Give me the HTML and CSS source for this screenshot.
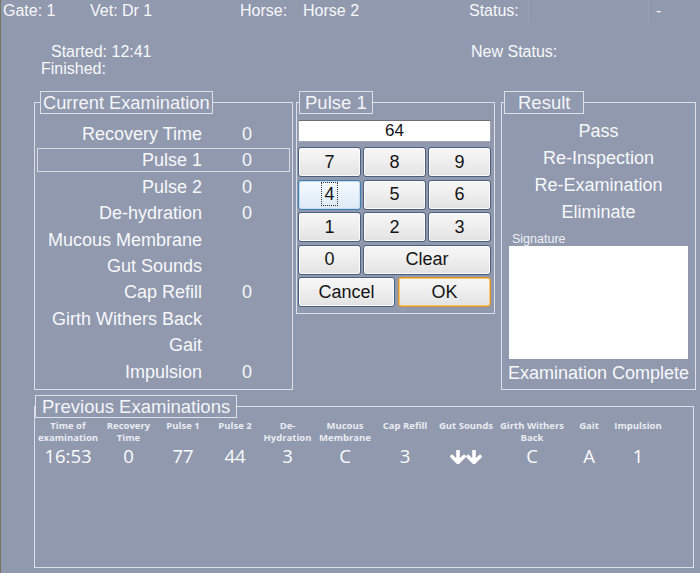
FILE: index.html
```html
<!DOCTYPE html>
<html lang="en">
<head>
    <meta charset="UTF-8">
    <title>Vet Gate Examination</title>
    <link rel="stylesheet" href="styles.css">
</head>
<body>
    <div class="info-row">
        <span class="gate">Gate: 1</span>
        <span class="vet">Vet: Dr 1</span>
        <span class="horse-label">Horse:</span>
        <span class="horse">Horse 2</span>
        <span class="status-label">Status:</span>
        <span class="status-box"></span>
        <span class="status-dash">-</span>
    </div>

    <div class="times">
        <div class="time-row">
            <span class="started">Started: 12:41</span>
            <span>New Status:</span>
        </div>
        <div class="time-row">
            <span class="finished">Finished:</span>
        </div>
    </div>

    <div class="panels">
        <fieldset class="group current">
            <legend>Current Examination</legend>
            <div class="exam-row"><span class="label">Recovery Time</span><span class="value">0</span></div>
            <div class="exam-row active"><span class="label">Pulse 1</span><span class="value">0</span></div>
            <div class="exam-row"><span class="label">Pulse 2</span><span class="value">0</span></div>
            <div class="exam-row"><span class="label">De-hydration</span><span class="value">0</span></div>
            <div class="exam-row"><span class="label">Mucous Membrane</span><span class="value"></span></div>
            <div class="exam-row"><span class="label">Gut Sounds</span><span class="value"></span></div>
            <div class="exam-row"><span class="label">Cap Refill</span><span class="value">0</span></div>
            <div class="exam-row"><span class="label">Girth Withers Back</span><span class="value"></span></div>
            <div class="exam-row"><span class="label">Gait</span><span class="value"></span></div>
            <div class="exam-row"><span class="label">Impulsion</span><span class="value">0</span></div>
        </fieldset>

        <fieldset class="group pulse">
            <legend>Pulse 1</legend>
            <div class="entry">64</div>
            <div class="keypad">
                <button class="key">7</button>
                <button class="key">8</button>
                <button class="key">9</button>
                <button class="key focused"><span class="focus-ring">4</span></button>
                <button class="key">5</button>
                <button class="key">6</button>
                <button class="key">1</button>
                <button class="key">2</button>
                <button class="key">3</button>
                <button class="key">0</button>
                <button class="key wide">Clear</button>
            </div>
            <div class="actions">
                <button class="key cancel">Cancel</button>
                <button class="key ok">OK</button>
            </div>
        </fieldset>

        <fieldset class="group result">
            <legend>Result</legend>
            <div class="choice">Pass</div>
            <div class="choice">Re-Inspection</div>
            <div class="choice">Re-Examination</div>
            <div class="choice">Eliminate</div>
            <div class="sig-label">Signature</div>
            <div class="sig-box"></div>
            <div class="complete">Examination Complete</div>
        </fieldset>
    </div>

    <fieldset class="group previous">
        <legend>Previous Examinations</legend>
        <div class="prev-grid">
            <div class="head">Time of<br>examination</div>
            <div class="head">Recovery<br>Time</div>
            <div class="head">Pulse 1</div>
            <div class="head">Pulse 2</div>
            <div class="head">De-<br>Hydration</div>
            <div class="head">Mucous<br>Membrane</div>
            <div class="head">Cap Refill</div>
            <div class="head">Gut Sounds</div>
            <div class="head">Girth Withers<br>Back</div>
            <div class="head">Gait</div>
            <div class="head">Impulsion</div>

            <div class="val">16:53</div>
            <div class="val">0</div>
            <div class="val">77</div>
            <div class="val">44</div>
            <div class="val">3</div>
            <div class="val">C</div>
            <div class="val">3</div>
            <div class="val">
                <svg class="arrows" width="32" height="14" viewBox="0 0 32 14">
                    <path d="M8 0.5 V12 M2 6.5 L8 12.5 L14 6.5" fill="none" stroke="#fff" stroke-width="3.6" stroke-linejoin="round" stroke-linecap="round"/>
                    <path d="M24 0.5 V12 M18 6.5 L24 12.5 L30 6.5" fill="none" stroke="#fff" stroke-width="3.6" stroke-linejoin="round" stroke-linecap="round"/>
                </svg>
            </div>
            <div class="val">C</div>
            <div class="val">A</div>
            <div class="val">1</div>
        </div>
    </fieldset>
</body>
</html>
```

FILE: styles.css
```css
body {
    margin: 0;
    width: 700px;
    height: 573px;
    overflow: hidden;
    background-color: #9199ae;
    color: #f7f8fb;
    font-family: "Liberation Sans", Arial, sans-serif;
    box-shadow: inset 1px 0 0 #77735f;
}

/* top info */
.info-row {
    display: flex;
    height: 22px;
    line-height: 22px;
    font-size: 16px;
    padding-left: 3px;
    white-space: nowrap;
}
.gate { width: 87px; }
.vet { width: 150px; }
.horse-label { width: 63px; }
.horse { width: 166px; }
.status-label { width: 59px; }
.status-box {
    width: 121px;
    box-sizing: border-box;
    border-left: 1px solid #99a2b7;
    border-right: 1px solid #99a2b7;
}
.status-dash { margin-left: 7px; }

.times {
    margin-top: 21px;
    font-size: 16px;
    line-height: 17px;
}
.time-row {
    display: flex;
    height: 17px;
    white-space: nowrap;
}
.started {
    margin-left: 51px;
    width: 420px;
}
.finished { margin-left: 41px; }

/* group boxes */
.panels {
    display: flex;
    align-items: flex-start;
    margin-top: 14px;
    padding-left: 34px;
}
.group {
    margin: 0;
    min-width: 0;
    box-sizing: border-box;
    border: 1px solid #dce0e8;
}
.group legend {
    border: 1px solid #dce0e8;
    padding: 0 2px;
    font-size: 18.5px;
    line-height: 21px;
    color: #f3f5f9;
    text-align: left;
}

.current {
    width: 259px;
    height: 299px;
    padding: 8px 2px 0;
}
.current legend {
    margin-left: 3px;
    font-size: 18.3px;
}
.exam-row {
    display: grid;
    grid-template-columns: 165px 87px;
    height: 24px;
    line-height: 24px;
    margin-bottom: 2.4px;
    font-size: 18px;
    white-space: nowrap;
}
.exam-row .label { text-align: right; }
.exam-row .value { padding-left: 40px; }
.exam-row.active {
    outline: 1px solid #d6dbe4;
    outline-offset: -1px;
}

/* keypad */
.pulse {
    width: 199px;
    height: 223px;
    margin-left: 3px;
    padding: 6px 2px 0 1px;
}
.pulse legend {
    margin-left: 1px;
    padding: 0 5px;
}
.entry {
    width: 193px;
    height: 22px;
    box-sizing: border-box;
    background: #fff;
    border: 1px solid #9ea3ad;
    border-top-color: #6b6f78;
    color: #111;
    text-align: center;
    font-size: 17px;
    line-height: 20px;
}
.keypad {
    display: grid;
    grid-template-columns: 63px 63px 63px;
    grid-auto-rows: 30px;
    column-gap: 2px;
    row-gap: 2.5px;
    margin-top: 5px;
}
.key {
    margin: 0;
    padding: 0;
    font-family: "Liberation Sans", Arial, sans-serif;
    font-size: 18px;
    color: #151515;
    border: 1px solid #4b607d;
    border-radius: 3px;
    background: linear-gradient(#f7f7f7, #eeeeee 50%, #e2e2e2);
    box-shadow: inset 0 0 0 1px #fbfbfb;
}
.key.wide { grid-column: span 2; }
.key.focused {
    border-color: #3c7fb1;
    background: linear-gradient(#f4f9fd, #e9f2fa 50%, #dde9f4);
    box-shadow: inset 0 0 0 1px #c5dcf0;
}
.focus-ring {
    border: 1px dotted #333;
    padding: 1px 2px;
}
.actions {
    display: flex;
    gap: 3px;
    margin-top: 2.5px;
    height: 30px;
}
.cancel { width: 97px; }
.ok {
    width: 93px;
    border-color: #d9952c;
    box-shadow: inset 0 0 0 1px #f5c874;
}

/* result */
.result {
    width: 195px;
    height: 299px;
    margin-left: 6px;
    padding: 4px 2px 0;
}
.result legend { padding: 0 13px; }
.choice {
    text-align: center;
    font-size: 18px;
    line-height: 27px;
}
.sig-label {
    margin: 7px 0 0 8px;
    font-size: 12.5px;
    line-height: 12px;
    color: #eef0f5;
}
.sig-box {
    width: 179px;
    height: 113px;
    margin: 1px 0 0 5px;
    background: #fff;
}
.complete {
    margin-top: 3px;
    text-align: center;
    font-size: 18px;
    line-height: 22px;
    white-space: nowrap;
}

/* previous examinations */
.previous {
    width: 660px;
    height: 173px;
    margin: 5px 0 0 34px;
    padding: 2px 1px 0;
}
.previous legend {
    padding: 0 6px;
    margin-left: -1px;
}
.prev-grid {
    display: grid;
    grid-template-columns: 64px 57px 52px 52px 53px 62px 58px 64px 68px 46px 52px;
    text-align: center;
}
.head {
    height: 24px;
    font-family: "Open Sans", sans-serif;
    font-weight: 700;
    font-size: 9.5px;
    line-height: 12px;
    color: #e9ecf2;
    white-space: nowrap;
}
.val {
    margin-top: 1px;
    font-family: "Open Sans", sans-serif;
    font-size: 18.5px;
    line-height: 22px;
    color: #fbfcfe;
}
.arrows {
    vertical-align: -1px;
}
```
